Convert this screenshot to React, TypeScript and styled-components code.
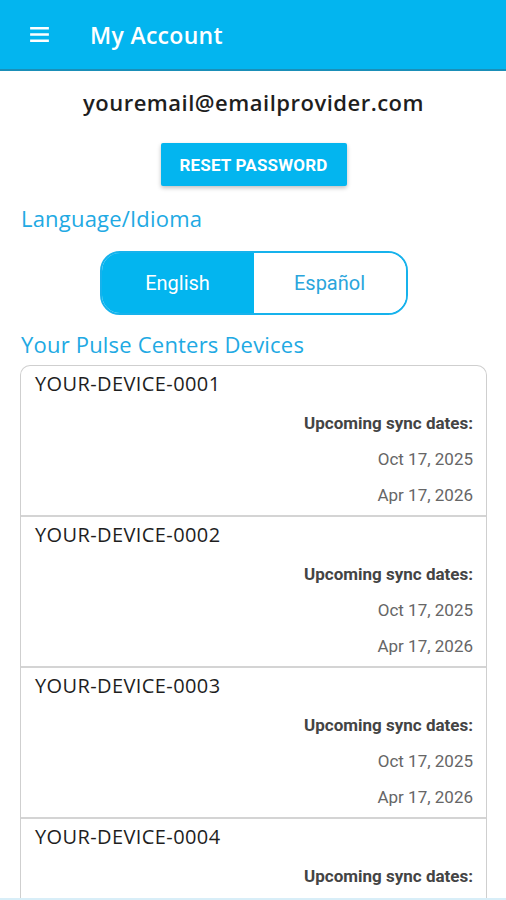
import styled, { createGlobalStyle } from "styled-components";

const devices = [
  { id: "YOUR-DEVICE-0001", dates: ["Oct 17, 2025", "Apr 17, 2026"] },
  { id: "YOUR-DEVICE-0002", dates: ["Oct 17, 2025", "Apr 17, 2026"] },
  { id: "YOUR-DEVICE-0003", dates: ["Oct 17, 2025", "Apr 17, 2026"] },
  { id: "YOUR-DEVICE-0004", dates: ["Oct 17, 2025", "Apr 17, 2026"] },
];

const GlobalStyle = createGlobalStyle`
  html, body {
    margin: 0;
    padding: 0;
    background: #ffffff;
    height: 900px;
    overflow: hidden;
  }
`;

const App = () => {
  return (
    <Screen>
      <GlobalStyle />
      <Header>
        <MenuIcon viewBox="0 0 24 24">
          <path d="M3 6h18M3 12h18M3 18h18" stroke="#fff" strokeWidth="2.4" />
        </MenuIcon>
        <Title>My Account</Title>
      </Header>
      <Body>
        <Email>youremail@emailprovider.com</Email>
        <ResetButton>RESET PASSWORD</ResetButton>
        <SectionTitle>Language/Idioma</SectionTitle>
        <Toggle>
          <ToggleOption $active>English</ToggleOption>
          <ToggleOption>Español</ToggleOption>
        </Toggle>
        <SectionTitle>Your Pulse Centers Devices</SectionTitle>
        <DeviceList>
          {devices.map((device) => (
            <DeviceCard key={device.id}>
              <DeviceName>{device.id}</DeviceName>
              <SyncLabel>Upcoming sync dates:</SyncLabel>
              {device.dates.map((date) => (
                <SyncDate key={date}>{date}</SyncDate>
              ))}
            </DeviceCard>
          ))}
        </DeviceList>
      </Body>
      <BottomEdge />
    </Screen>
  );
};

export default App;

const Screen = styled.div`
  position: relative;
  width: 506px;
  height: 900px;
  overflow: hidden;
  background: #fff;
`;

const Header = styled.div`
  height: 71px;
  box-sizing: border-box;
  background-color: #03b5ef;
  border-bottom: 2px solid #1a8fb8;
  display: flex;
  align-items: center;
  padding-left: 27px;
`;

const MenuIcon = styled.svg`
  width: 25px;
  height: 25px;
  margin-right: 38px;
`;

const Title = styled.div`
  color: #fff;
  font-family: "Open Sans", sans-serif;
  font-size: 23px;
  font-weight: 600;
  letter-spacing: 0.3px;
  margin-top: 1px;
`;

const Body = styled.div`
  display: flex;
  flex-direction: column;
  padding: 0 19px 0 20px;
`;

const Email = styled.div`
  text-align: center;
  font-family: "Open Sans", sans-serif;
  font-size: 22px;
  font-weight: 600;
  color: #1e1e1e;
  margin-top: 16px;
  letter-spacing: 0.5px;
`;

const ResetButton = styled.button`
  align-self: center;
  width: 186px;
  height: 43px;
  margin-top: 26px;
  border: none;
  border-radius: 2px;
  background-color: #03b5ef;
  color: #fff;
  font-family: Roboto, sans-serif;
  font-size: 17px;
  font-weight: 700;
  letter-spacing: 0.2px;
  padding: 0;
  box-shadow: 0 2px 4px rgba(0, 0, 0, 0.25);
`;

const SectionTitle = styled.div`
  font-family: "Open Sans", sans-serif;
  font-size: 22px;
  color: #21a9e3;
  margin-top: 17px;
  margin-left: 1px;
  letter-spacing: 0.2px;
`;

const Toggle = styled.div`
  align-self: center;
  display: flex;
  width: 308px;
  height: 64px;
  margin-top: 18px;
  margin-bottom: -3px;
  border: 2px solid #16b2ec;
  border-radius: 20px;
  overflow: hidden;
  box-sizing: border-box;
`;

const ToggleOption = styled.div<{ $active?: boolean }>`
  flex: 1;
  display: flex;
  align-items: center;
  justify-content: center;
  font-family: Roboto, sans-serif;
  font-size: 20px;
  background-color: ${(p) => (p.$active ? "#03b5ef" : "#fff")};
  color: ${(p) => (p.$active ? "#fff" : "#2aa5dc")};
`;

const DeviceList = styled.div`
  margin-top: 6px;
  border: 1px solid #cfcfcf;
  border-bottom: none;
  border-radius: 10px 10px 0 0;
  overflow: hidden;
`;

const DeviceCard = styled.div`
  height: 151px;
  box-sizing: border-box;
  display: flex;
  flex-direction: column;
  padding: 4px 13px 0 14px;
  border-bottom: 2px solid #d4d4d4;
`;

const DeviceName = styled.div`
  font-family: "Open Sans", sans-serif;
  font-size: 20px;
  color: #1e1e1e;
  letter-spacing: 0.4px;
`;

const SyncLabel = styled.div`
  align-self: flex-end;
  margin-top: 16px;
  font-family: Roboto, sans-serif;
  font-size: 17px;
  font-weight: 700;
  color: #444;
`;

const SyncDate = styled.div`
  align-self: flex-end;
  margin-top: 16px;
  font-family: Roboto, sans-serif;
  font-size: 17px;
  color: #666;
`;

const BottomEdge = styled.div`
  position: absolute;
  left: 0;
  right: 0;
  bottom: 0;
  height: 2px;
  background: #d8eef8;
`;
